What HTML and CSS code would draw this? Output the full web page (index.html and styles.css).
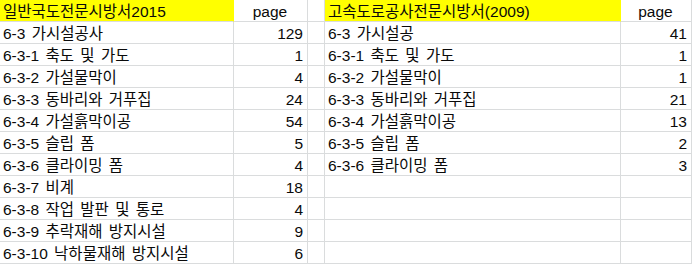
FILE: index.html
```html
<!DOCTYPE html>
<html lang="ko">
<head>
<meta charset="utf-8">
<link rel="stylesheet" href="styles.css">
</head>
<body>
<div class="sheet">
  <div class="cell title">일반국도전문시방서2015</div><div class="cell head">page</div><div class="cell gap"></div><div class="cell title">고속도로공사전문시방서(2009)</div><div class="cell head">page</div>

  <div class="cell">6-3 가시설공사</div><div class="cell num">129</div><div class="cell gap"></div><div class="cell">6-3 가시설공</div><div class="cell num">41</div>
  <div class="cell">6-3-1 축도 및 가도</div><div class="cell num">1</div><div class="cell gap"></div><div class="cell">6-3-1 축도 및 가도</div><div class="cell num">1</div>
  <div class="cell">6-3-2 가설물막이</div><div class="cell num">4</div><div class="cell gap"></div><div class="cell">6-3-2 가설물막이</div><div class="cell num">1</div>
  <div class="cell">6-3-3 동바리와 거푸집</div><div class="cell num">24</div><div class="cell gap"></div><div class="cell">6-3-3 동바리와 거푸집</div><div class="cell num">21</div>
  <div class="cell">6-3-4 가설흙막이공</div><div class="cell num">54</div><div class="cell gap"></div><div class="cell">6-3-4 가설흙막이공</div><div class="cell num">13</div>
  <div class="cell">6-3-5 슬립 폼</div><div class="cell num">5</div><div class="cell gap"></div><div class="cell">6-3-5 슬립 폼</div><div class="cell num">2</div>
  <div class="cell">6-3-6 클라이밍 폼</div><div class="cell num">4</div><div class="cell gap"></div><div class="cell">6-3-6 클라이밍 폼</div><div class="cell num">3</div>
  <div class="cell">6-3-7 비계</div><div class="cell num">18</div><div class="cell gap"></div><div class="cell"></div><div class="cell num"></div>
  <div class="cell">6-3-8 작업 발판 및 통로</div><div class="cell num">4</div><div class="cell gap"></div><div class="cell"></div><div class="cell num"></div>
  <div class="cell">6-3-9 추락재해 방지시설</div><div class="cell num">9</div><div class="cell gap"></div><div class="cell"></div><div class="cell num"></div>
  <div class="cell">6-3-10 낙하물재해 방지시설</div><div class="cell num">6</div><div class="cell gap"></div><div class="cell"></div><div class="cell num"></div>
</div>
</body>
</html>
```
FILE: styles.css
```css
html, body {
  margin: 0;
  padding: 0;
  background: #ffffff;
}

.sheet {
  display: grid;
  grid-template-columns: 234px 74px 17px 296px 71px;
  grid-auto-rows: 22px;
  font-family: "Liberation Sans", "Noto Sans CJK KR", sans-serif;
  font-size: 15.5px;
  word-spacing: 2px;
  color: #0a0a0a;
}

.cell {
  box-sizing: border-box;
  border-right: 1px solid #dadcdd;
  border-bottom: 1px solid #dadcdd;
  padding: 2px 4px 0 3px;
  line-height: 19px;
  white-space: nowrap;
  overflow: hidden;
}

.title {
  background: #ffff00;
  border-right-color: #ffff00;
}

.head {
  text-align: center;
}

.num {
  text-align: right;
}
```
